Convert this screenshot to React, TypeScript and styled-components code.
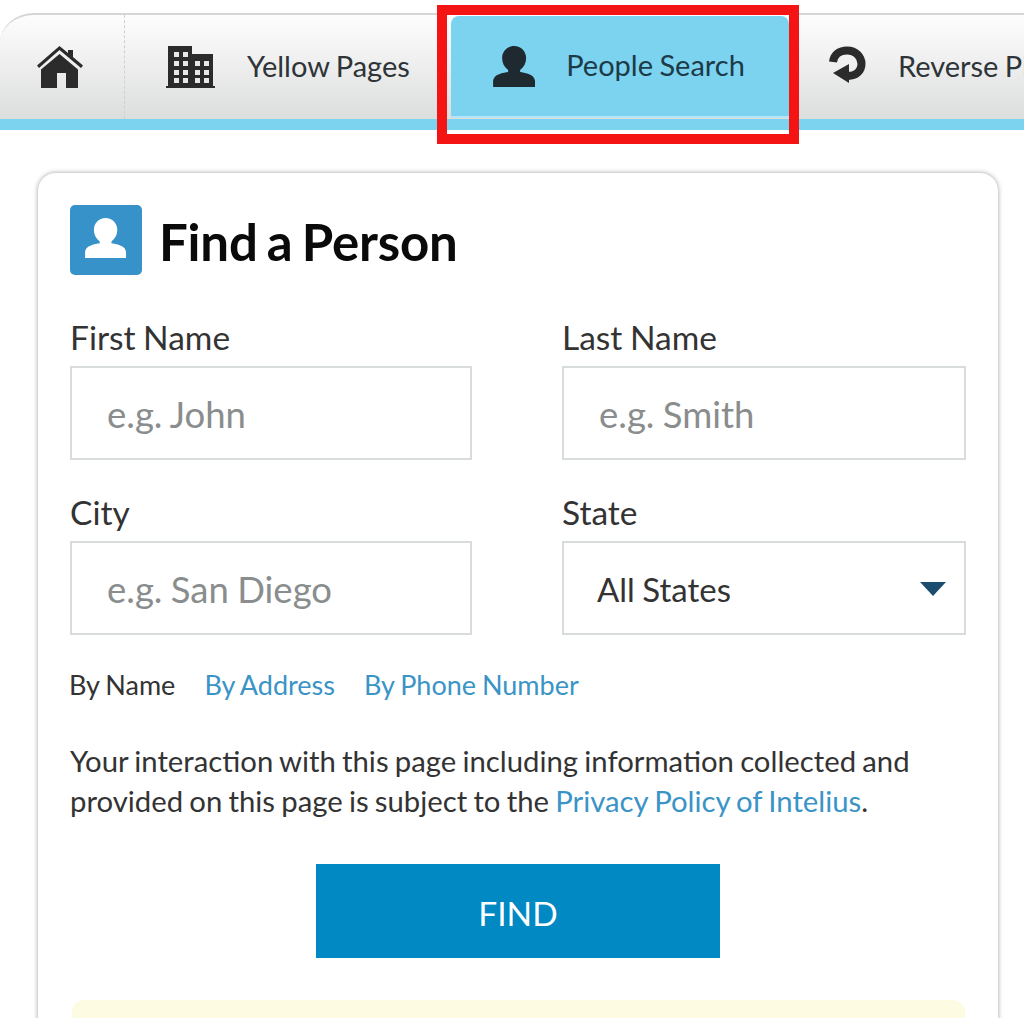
import React from "react";
import styled, { createGlobalStyle } from "styled-components";

const GlobalStyle = createGlobalStyle`
  html, body {
    margin: 0;
    padding: 0;
    background: #fff;
    font-family: "Lato", "Liberation Sans", sans-serif;
  }
`;

const Page = styled.div`
  position: relative;
  width: 1024px;
  height: 1018px;
  padding-top: 13px;
  box-sizing: border-box;
  overflow: hidden;
  background: #fff;
`;

const Nav = styled.nav`
  display: flex;
  height: 117px;
  box-sizing: border-box;
  border-top: 2px solid #d6d6d6;
  border-bottom: 11px solid #7cd3f0;
  border-top-left-radius: 34px 30px;
  background: linear-gradient(#fdfdfd 0%, #f4f4f4 30%, #dcdddd 100%);
  white-space: nowrap;
`;

const Tab = styled.a<{ $active?: boolean; $width?: number; $pad?: number; $gap?: number }>`
  display: flex;
  align-items: center;
  flex: none;
  width: ${(p) => (p.$width ? `${p.$width}px` : "auto")};
  height: ${(p) => (p.$active ? "102px" : "104px")};
  box-sizing: border-box;
  padding-left: ${(p) => p.$pad ?? 0}px;
  gap: ${(p) => p.$gap ?? 32}px;
  margin-top: ${(p) => (p.$active ? "1px" : "0")};
  font-size: 29px;
  background: ${(p) => (p.$active ? "#7cd3f0" : "transparent")};
  border-radius: ${(p) => (p.$active ? "8px 8px 0 0" : "0")};
  border-bottom: ${(p) => (p.$active ? "2px solid #b4e4f5" : "none")};
  color: ${(p) => (p.$active ? "#1d3a48" : "#2e3438")};
`;

const HomeTab = styled(Tab)`
  border-right: 1px dashed #cfcfcf;
`;

const TabLabel = styled.span`
  margin-bottom: 4px;
  word-spacing: -1px;
`;

const RedOutline = styled.div`
  position: absolute;
  left: 437px;
  top: 5px;
  width: 362px;
  height: 139px;
  box-sizing: border-box;
  border: 10px solid #f51414;
  pointer-events: none;
`;

const Card = styled.section`
  width: 960px;
  height: 900px;
  margin: 43px 0 0 38px;
  box-sizing: border-box;
  padding: 32px 32px 0;
  background: #fff;
  border-radius: 18px 18px 0 0;
  box-shadow: 0 0 5px rgba(0, 0, 0, 0.38);
`;

const TitleRow = styled.header`
  display: flex;
  align-items: center;
  gap: 18px;
  height: 70px;
`;

const TitleBadge = styled.div`
  display: flex;
  align-items: center;
  justify-content: center;
  width: 72px;
  height: 70px;
  box-sizing: border-box;
  padding-bottom: 4px;
  border-radius: 5px;
  background: #3792c9;
`;

const Title = styled.h1`
  margin: 4px 0 0 -1px;
  color: #0a0a0a;
  font-size: 51px;
  font-weight: 700;
  line-height: 66px;
  letter-spacing: -0.2px;
  word-spacing: -3px;
`;

const FormGrid = styled.div`
  display: grid;
  grid-template-columns: 402px 404px;
  column-gap: 90px;
  row-gap: 33px;
  margin-top: 43px;
`;

const Field = styled.div`
  display: flex;
  flex-direction: column;
`;

const Label = styled.label`
  color: #333;
  font-size: 33.5px;
  line-height: 38px;
  height: 38px;
  margin-bottom: 10px;
  word-spacing: -1px;
`;

const InputBox = styled.div<{ $select?: boolean }>`
  display: flex;
  align-items: center;
  justify-content: space-between;
  height: 94px;
  box-sizing: border-box;
  padding: 2px 18px 0 ${(p) => (p.$select ? "33px" : "35px")};
  border: 2px solid #d9dcdc;
  color: ${(p) => (p.$select ? "#333" : "#8a8d8d")};
  font-size: ${(p) => (p.$select ? "33px" : "36.5px")};
  word-spacing: -1px;
`;

const Caret = styled.span`
  width: 0;
  height: 0;
  border-left: 13px solid transparent;
  border-right: 13px solid transparent;
  border-top: 14px solid #1d4d6e;
`;

const SearchLinks = styled.div`
  display: flex;
  gap: 29px;
  margin-top: 32px;
  margin-left: -1px;
  font-size: 27px;
  line-height: 36px;
  color: #333;
  word-spacing: -1px;
`;

const LinkText = styled.a`
  color: #3a94c6;
`;

const Notice = styled.p`
  margin: 38px 0 0;
  color: #333;
  font-size: 29.3px;
  line-height: 40px;
  word-spacing: -1.3px;
`;

const FindButton = styled.button`
  display: block;
  width: 404px;
  height: 94px;
  margin: 43px auto 0;
  border: none;
  background: #0089c2;
  color: #fff;
  font-family: inherit;
  font-size: 33.5px;
  padding: 4px 0 0;
`;

const Alert = styled.div`
  height: 40px;
  margin: 42px 0 0 2px;
  width: 893px;
  border-radius: 12px 12px 0 0;
  background: #fdfbe2;
`;

const HomeIcon = () => (
  <svg width="46" height="42" viewBox="0 0 46 42" fill="#2b2b2b">
    <path d="M22.500 0 L31 7 V4 H36 V11 L46 19.500 L44 22 L22.500 4 L2 22 L0 19.500 Z" />
    <path d="M22.500 8 L41 23.500 V42 H29 V27 H20 V42 H4 V23.500 Z" />
  </svg>
);

const BuildingIcon = () => (
  <svg width="49" height="42" viewBox="0 0 49 42">
    <path fill="#2b2b2b" d="M2 0 H26 V8 H47 V40 H49 V42 H0 V40 H2 Z" />
    <g fill="#e8e8e8">
      {[6, 15, 24, 32].map((y) =>
        [8, 17].map((x) => <rect key={`l-${x}-${y}`} x={x} y={y} width="5" height="5" />)
      )}
      {[15, 24, 32].map((y) =>
        [29, 38].map((x) => <rect key={`r-${x}-${y}`} x={x} y={y} width="5" height="5" />)
      )}
    </g>
  </svg>
);

const PersonIcon = ({ color, height = 41 }: { color: string; height?: number }) => (
  <svg width={height * 1.03} height={height} viewBox="0 0 42 41" fill={color}>
    <path d="M21 0 C28 0 33 5.500 33 12 C33 17 31 21 27 24 V26 C31 27 42 27.500 42 36 V41 H0 V36 C0 27.500 11 27 15 26 V24 C11 21 9 17 9 12 C9 5.500 14 0 21 0 Z" />
  </svg>
);

const ReverseIcon = () => (
  <svg width="38" height="42" viewBox="0 0 38 42" fill="none">
    <path
      d="M5 16 C6 8 12 4.500 19 4.500 C28 4.500 33.500 11 33.500 18 C33.500 25 28 30 20 30"
      stroke="#2b2b2b"
      strokeWidth="8"
    />
    <path d="M5 27 L21 18 V37 Z" fill="#2b2b2b" />
  </svg>
);

export default function App() {
  return (
    <Page>
      <GlobalStyle />
      <Nav>
        <HomeTab $width={125} $pad={37}>
          <HomeIcon />
        </HomeTab>
        <Tab $width={326} $pad={41} $gap={32}>
          <BuildingIcon />
          <TabLabel>Yellow Pages</TabLabel>
        </Tab>
        <Tab $active $width={338} $pad={42} $gap={31}>
          <PersonIcon color="#1f2a30" />
          <TabLabel>People Search</TabLabel>
        </Tab>
        <Tab $pad={39} $gap={32}>
          <ReverseIcon />
          <TabLabel>Reverse Phone</TabLabel>
        </Tab>
      </Nav>
      <RedOutline />
      <Card>
        <TitleRow>
          <TitleBadge>
            <PersonIcon color="#fff" height={40} />
          </TitleBadge>
          <Title>Find a Person</Title>
        </TitleRow>
        <FormGrid>
          <Field>
            <Label>First Name</Label>
            <InputBox>e.g. John</InputBox>
          </Field>
          <Field>
            <Label>Last Name</Label>
            <InputBox>e.g. Smith</InputBox>
          </Field>
          <Field>
            <Label>City</Label>
            <InputBox>e.g. San Diego</InputBox>
          </Field>
          <Field>
            <Label>State</Label>
            <InputBox $select>
              <span>All States</span>
              <Caret />
            </InputBox>
          </Field>
        </FormGrid>
        <SearchLinks>
          <span>By Name</span>
          <LinkText>By Address</LinkText>
          <LinkText>By Phone Number</LinkText>
        </SearchLinks>
        <Notice>
          Your interaction with this page including information collected and
          <br />
          provided on this page is subject to the <LinkText>Privacy Policy of Intelius</LinkText>.
        </Notice>
        <FindButton>FIND</FindButton>
        <Alert />
      </Card>
    </Page>
  );
}
